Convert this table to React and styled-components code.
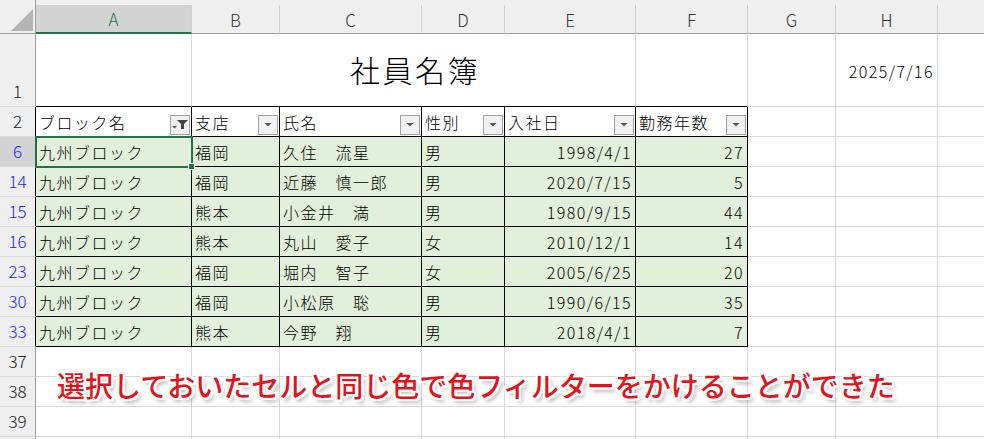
import React from 'react'
import styled, { createGlobalStyle } from 'styled-components'

const GlobalStyle = createGlobalStyle`
  html, body { margin: 0; padding: 0; background: #fff; }
  body {
    overflow: hidden;
    font-family: "Noto Sans CJK JP", "Noto Sans", sans-serif;
  }
`

const GREEN = '#217346'
const GRID = '#d9d9d9'
const HEAD_LINE = '#9e9e9e'

const COLS = [156, 88, 142, 83, 131, 112, 88, 102, 100]
const LETTERS = ['A', 'B', 'C', 'D', 'E', 'F', 'G', 'H', 'I']
const HEADS = ['ブロック名', '支店', '氏名', '性別', '入社日', '勤務年数']

const rows = [
  [6, '九州ブロック', '福岡', '久住　流星', '男', '1998/4/1', 27],
  [14, '九州ブロック', '福岡', '近藤　慎一郎', '男', '2020/7/15', 5],
  [15, '九州ブロック', '熊本', '小金井　満', '男', '1980/9/15', 44],
  [16, '九州ブロック', '熊本', '丸山　愛子', '女', '2010/12/1', 14],
  [23, '九州ブロック', '福岡', '堀内　智子', '女', '2005/6/25', 20],
  [30, '九州ブロック', '福岡', '小松原　聡', '男', '1990/6/15', 35],
  [33, '九州ブロック', '熊本', '今野　翔', '男', '2018/4/1', 7],
]

const Sheet = styled.div`
  position: relative;
  display: grid;
  grid-template-columns: 36px ${COLS.map((c) => c + 'px').join(' ')};
  grid-template-rows: 5px 29px 73px repeat(12, 30px);
  width: 984px;
  height: 439px;
  overflow: hidden;
  background: #fff;
`

const Corner = styled.div`
  grid-row: 1 / span 2;
  background: #efefef;
  border-right: 1px solid ${HEAD_LINE};
  border-bottom: 1px solid ${HEAD_LINE};
  box-sizing: border-box;
  display: flex;
  align-items: flex-end;
  justify-content: flex-end;
  padding: 0 2px 2px 0;
  svg { display: block; }
`

const Strip = styled.div`
  grid-column: 2 / -1;
  background: #efefef;
`

const ColHead = styled.div`
  box-sizing: border-box;
  display: flex;
  align-items: center;
  justify-content: center;
  font-size: 17px;
  font-weight: 300;
  color: ${(p) => (p.$active ? GREEN : '#333')};
  background: ${(p) => (p.$active ? '#d3d3d3' : '#efefef')};
  border-right: 1px solid #d0d0d0;
  border-bottom: ${(p) => (p.$active ? `2px solid ${GREEN}` : `1px solid ${HEAD_LINE}`)};
`

const RowHead = styled.div`
  box-sizing: border-box;
  display: flex;
  align-items: flex-end;
  justify-content: center;
  padding-bottom: 5px;
  font-size: 17px;
  font-weight: 300;
  line-height: 20px;
  color: ${(p) => (p.$filtered ? '#1f1fff' : '#222')};
  background: ${(p) => (p.$active ? '#d3d3d3' : '#efefef')};
  border-right: 1px solid ${(p) => (p.$edge ? '#000' : HEAD_LINE)};
  border-bottom: 1px solid ${GRID};
`

const Cell = styled.div`
  position: relative;
  box-sizing: border-box;
  display: flex;
  align-items: center;
  justify-content: ${(p) => (p.$right ? 'flex-end' : p.$center ? 'center' : 'flex-start')};
  padding: ${(p) => (p.$right ? '1px 3px 0 0' : '1px 0 0 3px')};
  grid-column: ${(p) => (p.$span ? `span ${p.$span}` : 'auto')};
  font-size: 16px;
  font-weight: 300;
  letter-spacing: ${(p) => (p.$right ? '1.4px' : '1.5px')};
  color: #000;
  white-space: nowrap;
  background: ${(p) => (p.$fill ? '#e2efda' : '#fff')};
  border-right: 1px solid ${(p) => (p.$box ? '#000' : GRID)};
  border-bottom: 1px solid ${(p) => (p.$box || p.$top ? '#000' : GRID)};
`

const Title = styled.span`
  font-size: 30px;
  letter-spacing: 2.5px;
  margin-top: -4px;
`

const HeadCell = styled(Cell)`
  padding: 0 0 0 3px;
  align-items: stretch;
`

const HeadText = styled.span`
  align-self: center;
  margin-top: 1px;
`

const FilterButton = styled.div`
  align-self: flex-end;
  margin: 0 1px 1px auto;
  width: 20px;
  height: 20px;
  box-sizing: border-box;
  border: 1px solid #a3a3a3;
  background: #f1f1f1;
  display: flex;
  align-items: center;
  justify-content: center;
  svg { display: block; }
`

const Selection = styled.div`
  position: absolute;
  z-index: 2;
  left: -1px;
  top: -1px;
  width: 158px;
  height: 32px;
  box-sizing: border-box;
  border: 2px solid ${GREEN};
  pointer-events: none;
`

const Handle = styled.div`
  position: absolute;
  right: -4px;
  bottom: -4px;
  width: 7px;
  height: 7px;
  box-sizing: border-box;
  background: ${GREEN};
  border: 1px solid #fff;
`

const Note = styled.div`
  position: absolute;
  z-index: 3;
  left: 57px;
  top: 369px;
  font-size: 28px;
  line-height: 32px;
  font-weight: 500;
  color: #e3131b;
  white-space: nowrap;
  text-shadow:
    2px 0 0 #fff, -2px 0 0 #fff, 0 2px 0 #fff, 0 -2px 0 #fff,
    2px 2px 0 #fff, -2px -2px 0 #fff, 2px -2px 0 #fff, -2px 2px 0 #fff,
    3px 4px 4px rgba(0, 0, 0, 0.35);
`

function Arrow() {
  return (
    <svg width="8" height="4" viewBox="0 0 8 4">
      <polygon points="0.5,0 7.5,0 4,3.5" fill="#555" />
    </svg>
  )
}

function Funnel() {
  return (
    <svg width="16" height="10" viewBox="0 0 16 10">
      <polygon points="5,0 16,0 12,4 12,9 9,9 9,4" fill="#444" />
      <polygon points="0,6 5,6 2.5,8.5" fill="#555" />
    </svg>
  )
}

export default function App() {
  const blank = (n, key) =>
    Array.from({ length: n }, (_, i) => <Cell key={key + i} />)

  return (
    <>
      <GlobalStyle />
      <Sheet>
        <Corner>
          <svg width="22" height="22" viewBox="0 0 22 22">
            <polygon points="22,0 22,22 0,22" fill="#b4b4b4" />
          </svg>
        </Corner>
        <Strip />
        {LETTERS.map((l, i) => (
          <ColHead key={l} $active={i === 0}>{l}</ColHead>
        ))}

        <RowHead>1</RowHead>
        <Cell $top />
        <Cell $span={4} $top $center>
          <Title>社員名簿</Title>
        </Cell>
        <Cell $top />
        <Cell />
        <Cell $right>2025/7/16</Cell>
        <Cell />

        <RowHead $edge>2</RowHead>
        {HEADS.map((h, i) => (
          <HeadCell key={h} $box>
            <HeadText>{h}</HeadText>
            <FilterButton>{i === 0 ? <Funnel /> : <Arrow />}</FilterButton>
          </HeadCell>
        ))}
        {blank(3, 'h')}

        {rows.map(([n, block, shop, name, sex, date, years]) => (
          <React.Fragment key={n}>
            <RowHead $edge $filtered $active={n === 6}>{n}</RowHead>
            <Cell $box $fill>
              {block}
              {n === 6 && (
                <Selection>
                  <Handle />
                </Selection>
              )}
            </Cell>
            <Cell $box $fill>{shop}</Cell>
            <Cell $box $fill>{name}</Cell>
            <Cell $box $fill>{sex}</Cell>
            <Cell $box $fill $right>{date}</Cell>
            <Cell $box $fill $right>{years}</Cell>
            {blank(3, 'r' + n)}
          </React.Fragment>
        ))}

        {[37, 38, 39, ''].map((n) => (
          <React.Fragment key={'e' + n}>
            <RowHead>{n}</RowHead>
            {blank(9, 'e' + n)}
          </React.Fragment>
        ))}

        <Note>選択しておいたセルと同じ色で色フィルターをかけることができた</Note>
      </Sheet>
    </>
  )
}
